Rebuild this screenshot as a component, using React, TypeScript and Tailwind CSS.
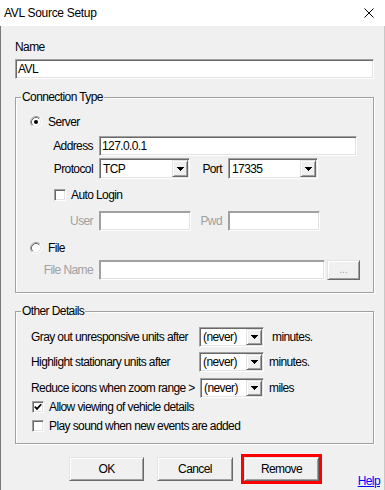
import React from "react";

const FONT = "font-['Liberation_Sans',Arial,sans-serif]";

function Sunken({ className, children, disabled }: { className: string; children?: React.ReactNode; disabled?: boolean }) {
  return (
    <div
      className={
        "flex items-center bg-white border border-t-[#a0a0a0] border-l-[#a0a0a0] border-b-white border-r-white p-[1px] pl-[2px] whitespace-nowrap " +
        (disabled
          ? "shadow-[inset_1px_1px_0_#a0a0a0,inset_-1px_-1px_0_#e3e3e3] "
          : "shadow-[inset_1px_1px_0_#696969,inset_-1px_-1px_0_#e3e3e3] ") +
        className
      }
    >
      {children}
    </div>
  );
}

function Raised({ className, children }: { className: string; children?: React.ReactNode }) {
  return (
    <div
      className={
        "flex items-center justify-center bg-[#f0f0f0] border border-t-[#e3e3e3] border-l-[#e3e3e3] border-b-[#696969] border-r-[#696969] shadow-[inset_1px_1px_0_#fff,inset_-1px_-1px_0_#a0a0a0] whitespace-nowrap " +
        className
      }
    >
      {children}
    </div>
  );
}

function Combo({ className, text }: { className: string; text: string }) {
  return (
    <div
      className={
        "flex items-stretch bg-white border border-t-[#a0a0a0] border-l-[#a0a0a0] border-b-white border-r-white p-[1px] shadow-[inset_1px_1px_0_#696969,inset_-1px_-1px_0_#e3e3e3] " +
        className
      }
    >
      <div className="flex-1 flex items-center pl-[2px] whitespace-nowrap">{text}</div>
      <Raised className="w-[16px]">
        <svg width="7" height="4" viewBox="0 0 7 4" shapeRendering="crispEdges">
          <polygon points="0,0 7,0 3.5,4" fill="#000" />
        </svg>
      </Raised>
    </div>
  );
}

function Radio({ checked }: { checked?: boolean }) {
  return (
    <svg width="12" height="12" viewBox="0 0 12 12" className="shrink-0">
      <circle cx="6" cy="6" r="4.5" fill="#fff" />
      <path d="M2.11 9.89 A5.5 5.5 0 0 1 9.89 2.11" fill="none" stroke="#a0a0a0" strokeWidth="1" />
      <path d="M9.89 2.11 A5.5 5.5 0 0 1 2.11 9.89" fill="none" stroke="#fff" strokeWidth="1" />
      <path d="M2.82 9.18 A4.5 4.5 0 0 1 9.18 2.82" fill="none" stroke="#696969" strokeWidth="1" />
      <path d="M9.18 2.82 A4.5 4.5 0 0 1 2.82 9.18" fill="none" stroke="#e3e3e3" strokeWidth="1" />
      {checked && <circle cx="6" cy="6" r="2" fill="#000" />}
    </svg>
  );
}

function Check({ checked }: { checked?: boolean }) {
  return (
    <div className="w-[12px] h-[12px] shrink-0 bg-white border border-t-[#a0a0a0] border-l-[#a0a0a0] border-b-white border-r-white shadow-[inset_1px_1px_0_#696969,inset_-1px_-1px_0_#e3e3e3] flex items-center justify-center">
      {checked && (
        <svg width="8" height="8" viewBox="0 0 8 8">
          <path d="M0.8 3.6 L3 5.9 L7.2 1.2" fill="none" stroke="#000" strokeWidth="1.7" />
        </svg>
      )}
    </div>
  );
}

function Group({ title, className, children }: { title: string; className: string; children: React.ReactNode }) {
  return (
    <div
      className={
        "relative w-[359px] border border-[#a0a0a0] shadow-[inset_1px_1px_0_#fff,1px_1px_0_#fff] flex flex-col " + className
      }
    >
      <span className="absolute left-[5px] -top-[8px] px-[1px] bg-[#f0f0f0] leading-[14px] whitespace-nowrap">{title}</span>
      {children}
    </div>
  );
}

export default function App() {
  return (
    <div
      className={
        "w-[385px] h-[490px] bg-[#f0f0f0] text-[12px] leading-[14px] tracking-[-0.6px] text-black overflow-hidden flex flex-col shadow-[inset_1px_0_0_#7a7a7a,inset_-1px_0_0_#c8c8c8] " +
        FONT
      }
    >
      <div className="h-[26px] shrink-0 bg-white flex items-center justify-between pl-[4px] pr-[11px]">
        <span className="text-[12px] leading-[14px] tracking-[-0.3px]">AVL Source Setup</span>
        <svg width="10" height="10" viewBox="0 0 10 10">
          <path d="M0.5 0.5 L9.5 9.5 M9.5 0.5 L0.5 9.5" stroke="#000" strokeWidth="1" />
        </svg>
      </div>

      <div className="flex-1 pl-[15px] flex flex-col">
        <div className="mt-[14px] h-[14px]">Name</div>
        <Sunken className="mt-[5px] w-[359px] h-[20px]">AVL</Sunken>

        <Group title="Connection Type" className="mt-[18px] pt-[18px] pb-[12px]">
          <div className="flex items-center h-[12px] ml-[14px] gap-[6px]">
            <Radio checked />
            <span>Server</span>
          </div>
          <div className="mt-[8px] flex items-center h-[20px]">
            <span className="w-[77px] text-right">Address</span>
            <Sunken className="ml-[6px] w-[258px] h-full">127.0.0.1</Sunken>
          </div>
          <div className="mt-[2px] flex items-center h-[21px]">
            <span className="w-[77px] text-right">Protocol</span>
            <Combo className="ml-[6px] w-[91px] h-full" text="TCP" />
            <span className="w-[32px] text-right">Port</span>
            <Combo className="ml-[6px] w-[90px] h-full" text="17335" />
          </div>
          <div className="mt-[10px] flex items-center h-[12px] ml-[38px] gap-[5px]">
            <Check />
            <span className="whitespace-nowrap">Auto Login</span>
          </div>
          <div className="mt-[10px] flex items-center h-[20px] text-[#a0a0a0]">
            <span className="w-[77px] text-right">User</span>
            <Sunken disabled className="ml-[6px] w-[92px] h-full" />
            <span className="w-[31px] text-right">Pwd</span>
            <Sunken disabled className="ml-[6px] w-[92px] h-full" />
          </div>
          <div className="mt-[11px] flex items-center h-[12px] ml-[14px] gap-[6px]">
            <Radio />
            <span>File</span>
          </div>
          <div className="mt-[6px] flex items-center h-[20px] text-[#a0a0a0]">
            <span className="w-[77px] text-right whitespace-nowrap">File Name</span>
            <Sunken disabled className="ml-[6px] w-[226px] h-full" />
            <Raised className="ml-[2px] w-[33px] h-full text-[10px] leading-[10px] tracking-normal text-[#a0a0a0]">...</Raised>
          </div>
        </Group>

        <Group title="Other Details" className="mt-[18px] pt-[15px] pb-[11px]">
          <div className="flex items-center h-[20px] ml-[15px]">
            <span className="w-[168px] whitespace-nowrap">Gray out unresponsive units after</span>
            <Combo className="w-[65px] h-full" text="(never)" />
            <span className="ml-[8px]">minutes.</span>
          </div>
          <div className="mt-[5px] flex items-center h-[20px] ml-[15px]">
            <span className="w-[168px] whitespace-nowrap">Highlight stationary units after</span>
            <Combo className="w-[65px] h-full" text="(never)" />
            <span className="ml-[5px]">minutes.</span>
          </div>
          <div className="mt-[6px] flex items-center h-[20px] ml-[15px]">
            <span className="w-[169px] whitespace-nowrap">Reduce icons when zoom range &gt;</span>
            <Combo className="w-[64px] h-full" text="(never)" />
            <span className="ml-[5px]">miles</span>
          </div>
          <div className="mt-[3px] flex items-center h-[12px] ml-[16px] gap-[5px]">
            <Check checked />
            <span className="whitespace-nowrap">Allow viewing of vehicle details</span>
          </div>
          <div className="mt-[7px] flex items-center h-[12px] ml-[16px] gap-[5px]">
            <Check />
            <span className="whitespace-nowrap">Play sound when new events are added</span>
          </div>
        </Group>

        <div className="mt-[13px] flex h-[32px]">
          <Raised className="ml-[54px] w-[75px] h-[24px]">OK</Raised>
          <Raised className="ml-[13px] w-[76px] h-[24px]">Cancel</Raised>
          <Raised className="ml-[11px] w-[75px] h-[24px] outline-[3px] outline-solid outline-[#ff0000]">Remove</Raised>
          <span className="ml-auto self-end mr-[5px] mb-[1px] text-[#0000ff] underline">Help</span>
        </div>
      </div>
    </div>
  );
}
